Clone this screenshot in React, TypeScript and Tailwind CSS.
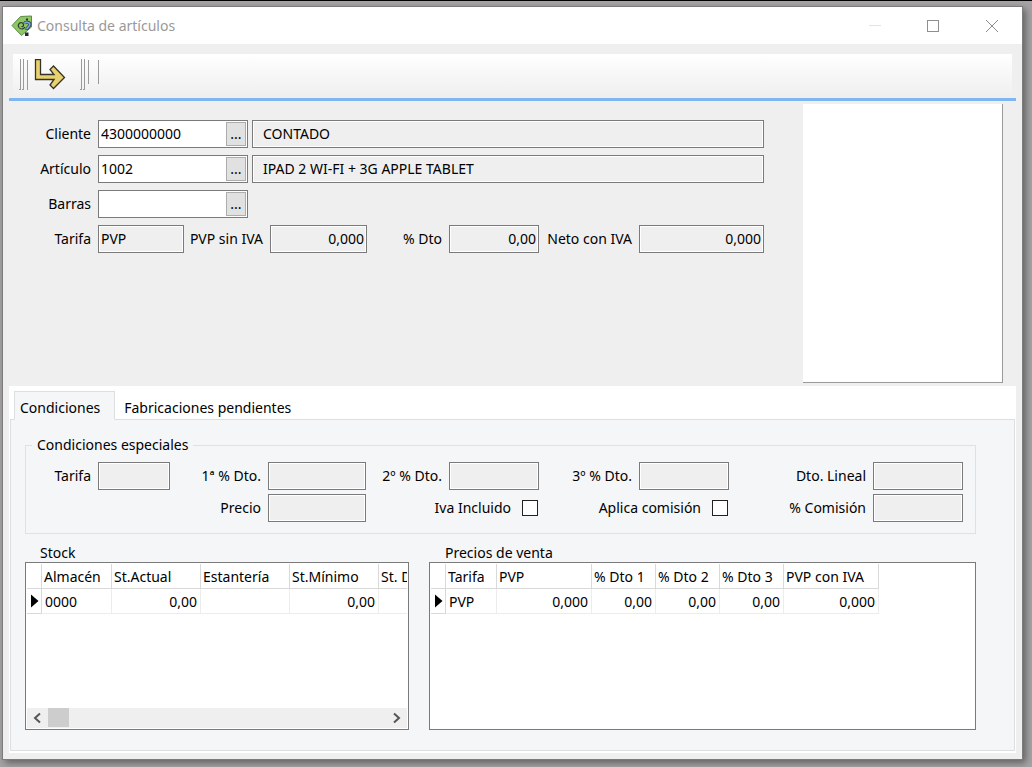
import { useState } from "react";
import type { ReactNode } from "react";
import clsx from "clsx";

const tabs = ["Condiciones", "Fabricaciones pendientes"];

type Column = { label: string; width: string; value: string; right?: boolean };

const stock: Column[] = [
  { label: "Almacén", width: "w-[70px]", value: "0000" },
  { label: "St.Actual", width: "w-[89px]", value: "0,00", right: true },
  { label: "Estantería", width: "w-[89px]", value: "" },
  { label: "St.Mínimo", width: "w-[89px]", value: "0,00", right: true },
  { label: "St. D", width: "w-[89px]", value: "" },
];

const precios: Column[] = [
  { label: "Tarifa", width: "w-[51px]", value: "PVP" },
  { label: "PVP", width: "w-[95px]", value: "0,000", right: true },
  { label: "% Dto 1", width: "w-[64px]", value: "0,00", right: true },
  { label: "% Dto 2", width: "w-[64px]", value: "0,00", right: true },
  { label: "% Dto 3", width: "w-[64px]", value: "0,00", right: true },
  { label: "PVP con IVA", width: "w-[95px]", value: "0,000", right: true },
];

function TagIcon() {
  return (
    <svg width="22" height="22" viewBox="0 0 22 22" aria-hidden="true">
      <path d="M1 10.500 L9.500 1.500 L20.500 1 V12 L10.500 20.500 Z" fill="#8dc863" stroke="#5d8a4a" />
      <path d="M8 12.500 C6 9.500 9 6.500 11.500 8 C13.500 9.500 12.500 12 10.500 11.500" fill="none" stroke="#2e4032" strokeWidth="1.200" />
      <path d="M8 12.500 C10 15 13 14 14 12" fill="none" stroke="#2e4032" strokeWidth="1.200" />
      <path d="M13.500 8.500 C14.500 6.500 19 7 18.800 9.500 C18.500 12 16 12 15.800 15" fill="none" stroke="#22303f" strokeWidth="3" />
      <path d="M13.500 8.500 C14.500 6.500 19 7 18.800 9.500 C18.500 12 16 12 15.800 14.500" fill="none" stroke="#78a5e2" strokeWidth="1.800" />
      <rect x="15" y="3.500" width="2" height="2" fill="#26362a" />
      <rect x="14" y="17.500" width="3.500" height="3.500" fill="#222a33" />
    </svg>
  );
}

function ExitIcon() {
  return (
    <svg width="32" height="32" viewBox="0 0 32 32" aria-hidden="true">
      <path
        d="M1.500 0.500 H6.500 V15.500 H20 L16 10.500 L19.500 7 L30.500 18.500 L19.500 29.500 L16 26 L20 20.500 H1.500 Z"
        fill="#e8d26e"
        stroke="#35322a"
        strokeWidth="1.300"
      />
    </svg>
  );
}

function Grip() {
  return (
    <span className="flex gap-px">
      <span className="h-[31px] w-0.5 border-r border-b border-[#9a9a9a]" />
      <span className="h-[31px] w-0.5 border-r border-b border-[#9a9a9a]" />
    </span>
  );
}

function Field({ id, value = "", className }: { id: string; value?: string; className?: string }) {
  return (
    <input
      id={id}
      readOnly
      defaultValue={value}
      className={clsx("h-7 min-w-0 border border-[#7a7a7a] bg-[#efefef] px-0.5 pb-0.5 shadow-[inset_0_0_0_1px_#fff] outline-none", className)}
    />
  );
}

function Lookup({ id, label, value, description }: { id: string; label: string; value: string; description?: string }) {
  return (
    <div className="flex items-center">
      <label htmlFor={id} className="w-[89px] pr-[7px] text-right">
        {label}
      </label>
      <div className="flex h-7 w-[150px] border border-[#7a7a7a] bg-white p-px">
        <input id={id} defaultValue={value} className="min-w-0 flex-1 px-px outline-none" />
        <button aria-label={`Buscar ${label}`} className="w-5 border border-[#adadad] bg-[#e1e1e1] leading-4">
          ...
        </button>
      </div>
      {description && (
        <input
          readOnly
          aria-label={`Descripción ${label}`}
          defaultValue={description}
          className="ml-1 h-7 min-w-0 flex-1 border border-[#7a7a7a] bg-[#efefef] px-2.5 pb-0.5 shadow-[inset_0_0_0_1px_#fff] outline-none"
        />
      )}
    </div>
  );
}

function FormLabel({ id, className, children }: { id: string; className?: string; children: ReactNode }) {
  return (
    <label htmlFor={id} className={clsx("pr-[7px] text-right whitespace-nowrap", className)}>
      {children}
    </label>
  );
}

function DataGrid({ columns }: { columns: Column[] }) {
  return (
    <div className="overflow-hidden">
      <table className="w-max table-fixed border-separate border-spacing-0">
        <thead>
          <tr className="h-[25px]">
            <th className="w-[15px] border-r border-b border-[#d9d9d9] p-0" />
            {columns.map((c) => (
              <th key={c.label} className={clsx("border-r border-b border-[#d9d9d9] p-0 pt-0.5 pl-0.5 text-left font-normal whitespace-nowrap", c.width)}>
                {c.label}
              </th>
            ))}
          </tr>
        </thead>
        <tbody>
          <tr className="h-[25px]">
            <td className="border-r border-b border-[#d9d9d9] p-0">
              <svg width="14" height="14" viewBox="0 0 14 14" aria-hidden="true">
                <path d="M4 0.500 L11.500 7 L4 13.500 Z" fill="#000" />
              </svg>
            </td>
            {columns.map((c) => (
              <td key={c.label} className={clsx("border-r border-b border-[#ececec] p-0 px-[3px] pt-0.5", c.right && "text-right")}>
                {c.value}
              </td>
            ))}
          </tr>
        </tbody>
      </table>
    </div>
  );
}

export default function App() {
  const [active, setActive] = useState(0);

  return (
    <div className="flex min-h-screen flex-col border-t border-black bg-[#a5a3a4] pt-[5px] pr-[9px] pb-2 pl-[2px] font-['Noto_Sans','Open_Sans',sans-serif] text-sm leading-5 text-black">
      <main className="flex flex-1 flex-col border border-[#7c7c7c] bg-[#efefef] shadow-[3px_3px_7px_rgba(0,0,0,0.4)]">
        <header className="flex h-[37px] items-center bg-white pl-2 text-[#999]">
          <TagIcon />
          <h1 className="ml-1 flex-1">Consulta de artículos</h1>
          <button aria-label="Minimizar" className="flex h-full w-[58px] items-center justify-center">
            <span className="h-px w-3 bg-[#e3e3e3]" />
          </button>
          <button aria-label="Maximizar" className="flex h-full w-[58px] items-center justify-center">
            <span className="size-3 border border-[#8f8f8f]" />
          </button>
          <button aria-label="Cerrar" className="flex h-full w-[60px] items-center justify-center">
            <svg width="14" height="14" viewBox="0 0 14 14" aria-hidden="true">
              <path d="M1 1 L13 13 M13 1 L1 13" stroke="#8a8a8a" />
            </svg>
          </button>
        </header>

        <div className="mx-2.5 mt-2.5 flex h-10 items-start bg-linear-to-b from-white to-[#f0f0f0] pt-[5px] pl-1.5">
          <Grip />
          <span className="mt-px ml-[3px] h-[30px] w-px bg-[#9a9a9a]" />
          <button aria-label="Salir" className="ml-1.5">
            <ExitIcon />
          </button>
          <span className="ml-[14px]">
            <Grip />
          </span>
          <span className="mt-px ml-[3px] h-6 w-px bg-[#9a9a9a]" />
          <span className="mt-px ml-[9px] h-6 w-px bg-[#9a9a9a]" />
        </div>
        <div className="mx-1.5 mt-1 h-[3px] bg-[#80b6ef]" />

        <section className="mx-1.5 flex h-[285px] shrink-0 gap-[39px]">
          <form className="flex min-w-0 flex-1 flex-col gap-[7px] pt-[19px]">
            <Lookup id="cliente" label="Cliente" value="4300000000" description="CONTADO" />
            <Lookup id="articulo" label="Artículo" value="1002" description="IPAD 2 WI-FI + 3G APPLE TABLET" />
            <Lookup id="barras" label="Barras" value="" />
            <div className="flex items-center">
              <FormLabel id="tarifa" className="w-[89px]">Tarifa</FormLabel>
              <Field id="tarifa" value="PVP" className="w-[86px]" />
              <FormLabel id="pvp" className="w-[86px]">PVP sin IVA</FormLabel>
              <Field id="pvp" value="0,000" className="w-[97px] text-right" />
              <FormLabel id="dto" className="w-[82px]">% Dto</FormLabel>
              <Field id="dto" value="0,00" className="w-[90px] text-right" />
              <FormLabel id="neto" className="w-[100px]">Neto con IVA</FormLabel>
              <Field id="neto" value="0,000" className="flex-1 text-right" />
            </div>
          </form>
          <div className="mt-[3px] mr-[13px] mb-[3px] w-[200px] border-r border-b border-[#999] bg-white" />
        </section>

        <section className="mx-1.5 mb-1.5 flex flex-1 flex-col bg-white px-px pt-[5px] pb-0.5">
          <div role="tablist" className="flex pl-1">
            {tabs.map((t, i) => (
              <button
                key={t}
                role="tab"
                aria-selected={active === i}
                onClick={() => setActive(i)}
                className={clsx(
                  "-mb-px h-[29px] border pt-1 pr-[14px]",
                  active === i ? "relative border-[#dcdfe2] border-b-[#f4f6f8] bg-[#f4f6f8] pl-[5px]" : "border-transparent pl-2",
                )}
              >
                {t}
              </button>
            ))}
          </div>

          <div role="tabpanel" className="flex flex-1 flex-col border border-[#dcdfe2] bg-[#f4f6f8] pr-[38px] pb-5 pl-[14px]">
            <fieldset className="mt-[15px] h-[99px] border border-[#dfe2e5] pr-3">
              <legend className="ml-1.5 px-[5px]">Condiciones especiales</legend>
              <div className="mt-[7px] grid grid-cols-[72px_72px_98px_98px_83px_90px_100px_90px_1fr_90px] items-center gap-y-1">
                <FormLabel id="c-tarifa">Tarifa</FormLabel>
                <Field id="c-tarifa" />
                <FormLabel id="c-dto1">1ª % Dto.</FormLabel>
                <Field id="c-dto1" />
                <FormLabel id="c-dto2">2º % Dto.</FormLabel>
                <Field id="c-dto2" />
                <FormLabel id="c-dto3">3º % Dto.</FormLabel>
                <Field id="c-dto3" />
                <FormLabel id="c-lineal">Dto. Lineal</FormLabel>
                <Field id="c-lineal" />

                <FormLabel id="c-precio" className="col-span-3">Precio</FormLabel>
                <Field id="c-precio" />
                <label className="col-span-2 flex items-center justify-end gap-[11px] pr-px">
                  Iva Incluido
                  <input type="checkbox" className="size-4 appearance-none border border-[#222] bg-white checked:bg-[#222]" />
                </label>
                <label className="col-span-2 flex items-center justify-end gap-[11px] pr-px">
                  Aplica comisión
                  <input type="checkbox" className="size-4 appearance-none border border-[#222] bg-white checked:bg-[#222]" />
                </label>
                <FormLabel id="c-comision">% Comisión</FormLabel>
                <Field id="c-comision" />
              </div>
            </fieldset>

            <div className="mt-[9px] grid flex-1 grid-cols-[384px_1fr] gap-x-5">
              <div className="flex min-w-0 flex-col">
                <h2 className="h-[19px] pl-[15px]">Stock</h2>
                <div className="flex min-h-[168px] flex-1 flex-col justify-between border border-[#7a7a7a] bg-white p-px">
                  <DataGrid columns={stock} />
                  <div className="flex h-5 bg-[#efefef]">
                    <button aria-label="Desplazar a la izquierda" className="flex w-[21px] items-center justify-center">
                      <svg width="10" height="12" viewBox="0 0 10 12" aria-hidden="true">
                        <path d="M7 1.500 L2 6 L7 10.500" fill="none" stroke="#555" strokeWidth="2" />
                      </svg>
                    </button>
                    <span className="h-[19px] w-[21px] bg-[#cdcdcd]" />
                    <button aria-label="Desplazar a la derecha" className="ml-auto flex w-[21px] items-center justify-center">
                      <svg width="10" height="12" viewBox="0 0 10 12" aria-hidden="true">
                        <path d="M2 1.500 L7 6 L2 10.500" fill="none" stroke="#555" strokeWidth="2" />
                      </svg>
                    </button>
                  </div>
                </div>
              </div>
              <div className="flex min-w-0 flex-col">
                <h2 className="h-[19px] pl-4">Precios de venta</h2>
                <div className="min-h-[168px] flex-1 border border-[#7a7a7a] bg-white p-px">
                  <DataGrid columns={precios} />
                </div>
              </div>
            </div>
          </div>
        </section>
      </main>
    </div>
  );
}
